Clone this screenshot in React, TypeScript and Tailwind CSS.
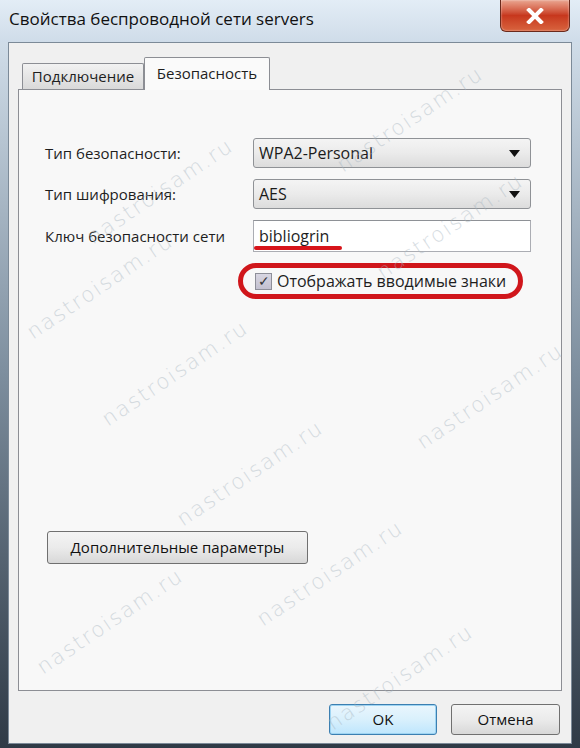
import React from 'react';

const marks = [
  { x: 175, y: 372 },
  { x: 250, y: 472 },
  { x: 330, y: 572 },
  { x: 400, y: 676 },
  { x: 490, y: 395 },
  { x: 100, y: 285 },
  { x: 410, y: 118 },
  { x: 160, y: 190 },
  { x: 450, y: 225 },
  { x: 110, y: 620 },
];

const Watermarks = () => (
  <div className="pointer-events-none absolute inset-0 overflow-hidden">
    {marks.map((m, i) => (
      <span
        key={i}
        className="absolute whitespace-nowrap text-[21px] font-light tracking-[2px] text-[#a7b5c0] opacity-45 [font-family:'DejaVu_Sans',sans-serif]"
        style={{ left: m.x - 85, top: m.y - 14, transform: 'rotate(-34deg)' }}
      >
        nastroisam.ru
      </span>
    ))}
  </div>
);

const Combo = ({ value }: { value: string }) => (
  <div className="flex h-[30px] w-[278px] items-center justify-between rounded-[3px] border border-[#8f9296] bg-gradient-to-b from-[#f4f4f4] via-[#ebebeb] to-[#dcdcdc] pl-[5px] pr-[10px] text-[16px] text-[#1a1a1a]">
    <span>{value}</span>
    <svg width="11" height="7" viewBox="0 0 11 7">
      <path d="M0 0 L11 0 L5.5 7 Z" fill="#111" />
    </svg>
  </div>
);

const App = () => {
  return (
    <div className="relative h-[748px] w-[580px] overflow-hidden bg-gradient-to-b from-[#dbe7f2] via-[#7d8e9e] to-[#2f3a46] [font-family:'Open_Sans','Noto_Sans',sans-serif] text-[#1e1e1e]">
      {/* title bar */}
      <div className="flex h-[42px] items-start justify-between bg-gradient-to-b from-[#e3edf6] to-[#cfdce9]">
        <div className="pl-[9px] pt-[6px] text-[17px] text-[#111]">Свойства беспроводной сети servers</div>
        <div className="mr-[10px] flex h-[32px] w-[70px] items-center justify-center rounded-b-[6px] border border-t-0 border-[#6b2a1c] bg-gradient-to-b from-[#e9a590] via-[#c7371d] to-[#d8633e] shadow-[inset_0_0_2px_rgba(255,255,255,0.7)]">
          <svg width="18" height="16" viewBox="0 0 18 16">
            <path d="M3 2 L15 14 M15 2 L3 14" stroke="#fff" strokeWidth="4" strokeLinecap="square" />
          </svg>
        </div>
      </div>

      {/* client area */}
      <div className="mx-[8px] flex h-[702px] flex-col border border-[#7c8a98] bg-[#f0f0f0]">
        {/* tabs */}
        <div className="flex h-[46px] items-end pl-[13px]">
          <div className="flex h-[26px] w-[122px] items-center justify-center rounded-t-[2px] border border-b-0 border-[#8c8e94] bg-gradient-to-b from-[#f2f2f2] to-[#d9d9d9] text-[15px]">
            Подключение
          </div>
          <div className="relative z-10 -mb-px flex h-[33px] w-[126px] items-start justify-center rounded-t-[2px] border border-b-0 border-[#8c8e94] bg-[#fafafa] pt-[4px] text-[15px]">
            Безопасность
          </div>
        </div>

        {/* tab panel */}
        <div className="mx-[9px] flex h-[602px] flex-col border border-[#8c8e94] bg-[#f8f8f8] pl-[26px] pt-[48px]">
          <div className="flex flex-col gap-[11px]">
            <div className="flex items-center">
              <div className="w-[208px] text-[15px]">Тип безопасности:</div>
              <Combo value="WPA2-Personal" />
            </div>
            <div className="flex items-center">
              <div className="w-[208px] text-[15px]">Тип шифрования:</div>
              <Combo value="AES" />
            </div>
            <div className="flex items-center">
              <div className="w-[208px] text-[15px]">Ключ безопасности сети</div>
              <div className="relative flex h-[32px] w-[278px] items-center border border-[#abadb3] border-t-[#8e9196] bg-white pl-[5px] text-[16px]">
                bibliogrin
                <div className="absolute left-[0px] top-[25px] h-[4px] w-[88px] rounded-full bg-[#d7141a]" />
              </div>
            </div>
          </div>

          <div className="ml-[193px] mt-[11px] flex h-[36px] w-[285px] items-center rounded-[18px] border-[5px] border-[#d0161b] pl-[12px]">
            <div className="flex h-[17px] w-[17px] items-center justify-center border border-[#8e8f99] bg-gradient-to-b from-[#d8d6e2] to-[#c3c1d0] text-[14px] leading-none text-[#333]">
              ✓
            </div>
            <span className="ml-[5px] text-[16px]">Отображать вводимые знаки</span>
          </div>

          <button className="ml-[2px] mt-[232px] flex h-[33px] w-[261px] items-center justify-center rounded-[3px] border border-[#707070] bg-gradient-to-b from-[#f4f4f4] via-[#ebebeb] to-[#d8d8d8] text-[15px] text-[#111]">
            Дополнительные параметры
          </button>
        </div>

        {/* bottom buttons */}
        <div className="flex justify-end gap-[14px] pr-[11px] pt-[13px]">
          <button className="flex h-[31px] w-[108px] items-center justify-center rounded-[3px] border border-[#3c7fb1] bg-gradient-to-b from-[#eaf6fd] via-[#d9f0fc] to-[#bee6fd] text-[15px] text-[#111] shadow-[inset_0_0_0_1px_#9ed4f2]">
            OK
          </button>
          <button className="flex h-[31px] w-[109px] items-center justify-center rounded-[3px] border border-[#707070] bg-gradient-to-b from-[#f4f4f4] via-[#ebebeb] to-[#d8d8d8] text-[15px] text-[#111]">
            Отмена
          </button>
        </div>
      </div>

      <Watermarks />
    </div>
  );
};

export default App;
